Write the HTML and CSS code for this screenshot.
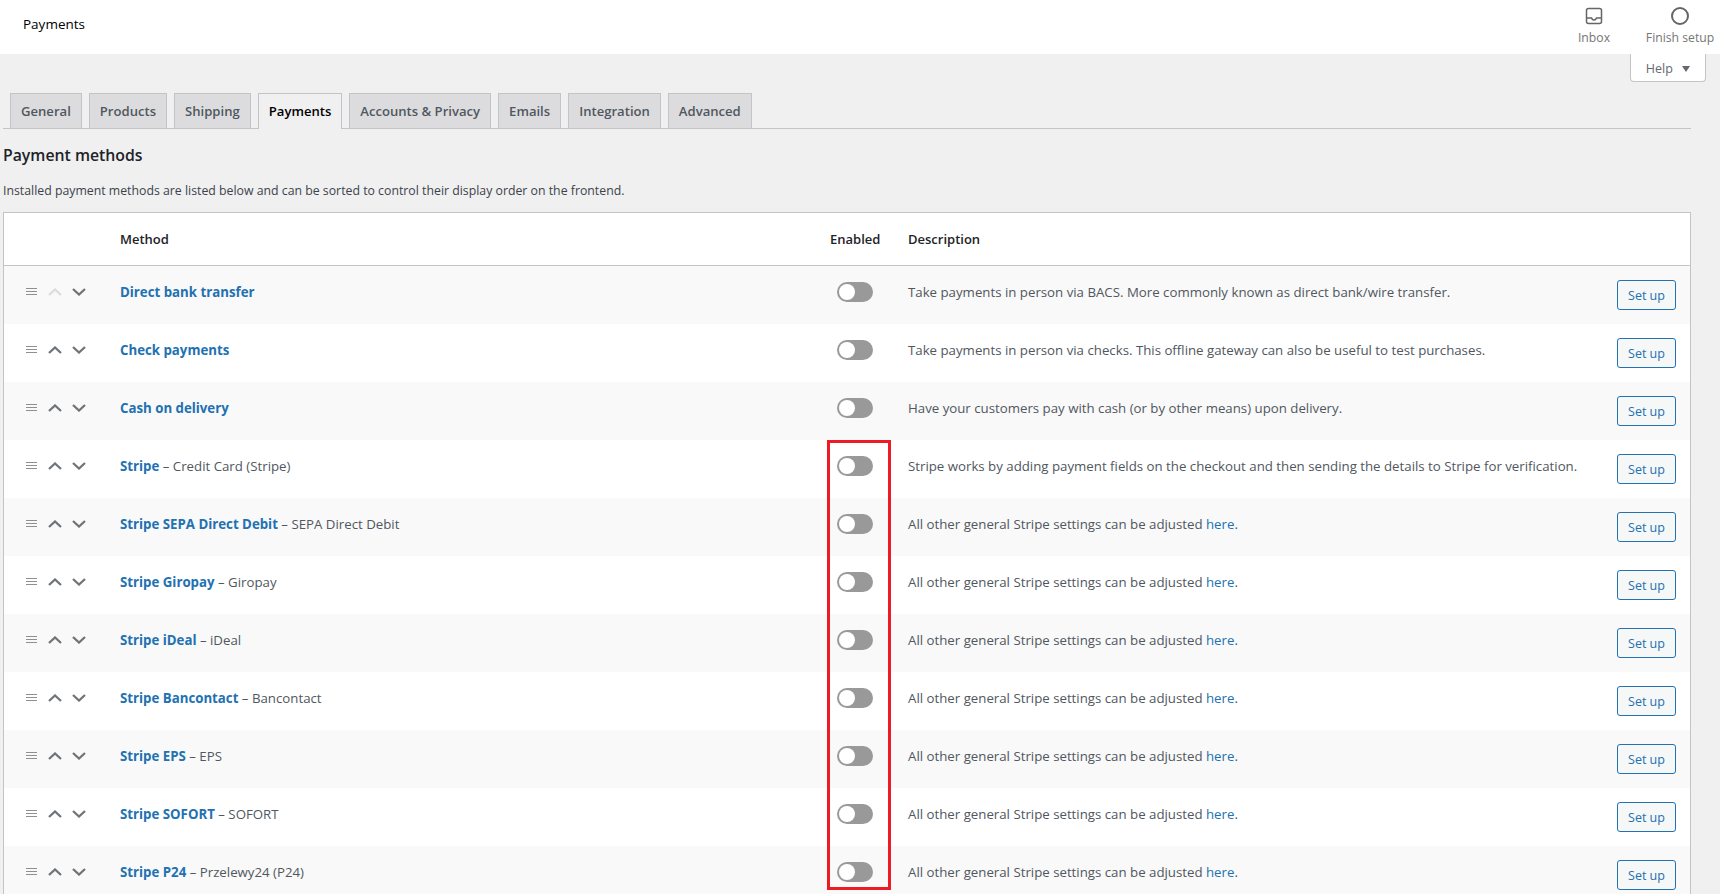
FILE: index.html
```html
<!DOCTYPE html>
<html lang="en">

<head>
    <meta charset="UTF-8">
    <meta name="viewport" content="width=device-width, initial-scale=1.0">
    <title>Payments</title>
    <link rel="stylesheet" href="styles.css">
</head>

<body>

    <svg class="defs" width="0" height="0">
        <symbol id="i-drag" viewBox="0 0 11 8"><path d="M0 .5h11M0 3.5h11M0 6.5h11" fill="none" stroke="currentColor" /></symbol>
        <symbol id="i-up" viewBox="0 0 14 8"><path d="M1 7l6-5.500L13 7" fill="none" stroke="currentColor" stroke-width="2.300" /></symbol>
        <symbol id="i-down" viewBox="0 0 14 8"><path d="M1 1l6 5.500L13 1" fill="none" stroke="currentColor" stroke-width="2.300" /></symbol>
    </svg>

    <header class="topbar">
        <div class="topbar-title">Payments</div>
        <div class="topbar-actions">
            <div class="action action-inbox">
                <svg width="18" height="18" viewBox="0 0 18 18">
                    <rect x="1.500" y="1.500" width="15" height="15" rx="2" fill="none" stroke="currentColor" stroke-width="1.500" />
                    <path d="M2 11h4.500c.5 1.500 1.300 2 2.500 2s2-.5 2.500-2H16" fill="none" stroke="currentColor" stroke-width="1.500" />
                </svg>
                <span>Inbox</span>
            </div>
            <div class="action action-setup">
                <svg width="20" height="20" viewBox="0 0 20 20">
                    <circle cx="10" cy="10" r="8" fill="none" stroke="currentColor" stroke-width="2" />
                </svg>
                <span>Finish setup</span>
            </div>
        </div>
    </header>

    <div class="help-row">
        <div class="help-tab">Help <span class="caret"></span></div>
    </div>

    <main class="content">
        <nav class="tabs">
            <a class="tab">General</a>
            <a class="tab">Products</a>
            <a class="tab">Shipping</a>
            <a class="tab active">Payments</a>
            <a class="tab">Accounts &amp; Privacy</a>
            <a class="tab">Emails</a>
            <a class="tab">Integration</a>
            <a class="tab">Advanced</a>
        </nav>

        <h2>Payment methods</h2>
        <p class="intro">Installed payment methods are listed below and can be sorted to control their display order on the frontend.</p>

        <div class="table-wrap">
            <table class="methods">
                <thead>
                    <tr>
                        <th class="col-sort"></th>
                        <th class="col-name">Method</th>
                        <th class="col-status">Enabled</th>
                        <th class="col-desc">Description</th>
                        <th class="col-action"></th>
                    </tr>
                </thead>
                <tbody>
                    <tr>
                        <td class="col-sort"><div class="sort"><svg class="drag"><use href="#i-drag" /></svg><svg class="arrow off"><use href="#i-up" /></svg><svg class="arrow"><use href="#i-down" /></svg></div></td>
                        <td class="col-name"><a>Direct bank transfer</a></td>
                        <td class="col-status"><span class="toggle"></span></td>
                        <td class="col-desc">Take payments in person via BACS. More commonly known as direct bank/wire transfer.</td>
                        <td class="col-action"><button>Set up</button></td>
                    </tr>
                    <tr>
                        <td class="col-sort"><div class="sort"><svg class="drag"><use href="#i-drag" /></svg><svg class="arrow"><use href="#i-up" /></svg><svg class="arrow"><use href="#i-down" /></svg></div></td>
                        <td class="col-name"><a>Check payments</a></td>
                        <td class="col-status"><span class="toggle"></span></td>
                        <td class="col-desc">Take payments in person via checks. This offline gateway can also be useful to test purchases.</td>
                        <td class="col-action"><button>Set up</button></td>
                    </tr>
                    <tr>
                        <td class="col-sort"><div class="sort"><svg class="drag"><use href="#i-drag" /></svg><svg class="arrow"><use href="#i-up" /></svg><svg class="arrow"><use href="#i-down" /></svg></div></td>
                        <td class="col-name"><a>Cash on delivery</a></td>
                        <td class="col-status"><span class="toggle"></span></td>
                        <td class="col-desc">Have your customers pay with cash (or by other means) upon delivery.</td>
                        <td class="col-action"><button>Set up</button></td>
                    </tr>
                    <tr>
                        <td class="col-sort"><div class="sort"><svg class="drag"><use href="#i-drag" /></svg><svg class="arrow"><use href="#i-up" /></svg><svg class="arrow"><use href="#i-down" /></svg></div></td>
                        <td class="col-name"><a>Stripe</a> – Credit Card (Stripe)</td>
                        <td class="col-status"><span class="toggle"></span></td>
                        <td class="col-desc">Stripe works by adding payment fields on the checkout and then sending the details to Stripe for verification.</td>
                        <td class="col-action"><button>Set up</button></td>
                    </tr>
                    <tr>
                        <td class="col-sort"><div class="sort"><svg class="drag"><use href="#i-drag" /></svg><svg class="arrow"><use href="#i-up" /></svg><svg class="arrow"><use href="#i-down" /></svg></div></td>
                        <td class="col-name"><a>Stripe SEPA Direct Debit</a> – SEPA Direct Debit</td>
                        <td class="col-status"><span class="toggle"></span></td>
                        <td class="col-desc">All other general Stripe settings can be adjusted <a class="plain">here</a>.</td>
                        <td class="col-action"><button>Set up</button></td>
                    </tr>
                    <tr>
                        <td class="col-sort"><div class="sort"><svg class="drag"><use href="#i-drag" /></svg><svg class="arrow"><use href="#i-up" /></svg><svg class="arrow"><use href="#i-down" /></svg></div></td>
                        <td class="col-name"><a>Stripe Giropay</a> – Giropay</td>
                        <td class="col-status"><span class="toggle"></span></td>
                        <td class="col-desc">All other general Stripe settings can be adjusted <a class="plain">here</a>.</td>
                        <td class="col-action"><button>Set up</button></td>
                    </tr>
                    <tr>
                        <td class="col-sort"><div class="sort"><svg class="drag"><use href="#i-drag" /></svg><svg class="arrow"><use href="#i-up" /></svg><svg class="arrow"><use href="#i-down" /></svg></div></td>
                        <td class="col-name"><a>Stripe iDeal</a> – iDeal</td>
                        <td class="col-status"><span class="toggle"></span></td>
                        <td class="col-desc">All other general Stripe settings can be adjusted <a class="plain">here</a>.</td>
                        <td class="col-action"><button>Set up</button></td>
                    </tr>
                    <tr>
                        <td class="col-sort"><div class="sort"><svg class="drag"><use href="#i-drag" /></svg><svg class="arrow"><use href="#i-up" /></svg><svg class="arrow"><use href="#i-down" /></svg></div></td>
                        <td class="col-name"><a>Stripe Bancontact</a> – Bancontact</td>
                        <td class="col-status"><span class="toggle"></span></td>
                        <td class="col-desc">All other general Stripe settings can be adjusted <a class="plain">here</a>.</td>
                        <td class="col-action"><button>Set up</button></td>
                    </tr>
                    <tr>
                        <td class="col-sort"><div class="sort"><svg class="drag"><use href="#i-drag" /></svg><svg class="arrow"><use href="#i-up" /></svg><svg class="arrow"><use href="#i-down" /></svg></div></td>
                        <td class="col-name"><a>Stripe EPS</a> – EPS</td>
                        <td class="col-status"><span class="toggle"></span></td>
                        <td class="col-desc">All other general Stripe settings can be adjusted <a class="plain">here</a>.</td>
                        <td class="col-action"><button>Set up</button></td>
                    </tr>
                    <tr>
                        <td class="col-sort"><div class="sort"><svg class="drag"><use href="#i-drag" /></svg><svg class="arrow"><use href="#i-up" /></svg><svg class="arrow"><use href="#i-down" /></svg></div></td>
                        <td class="col-name"><a>Stripe SOFORT</a> – SOFORT</td>
                        <td class="col-status"><span class="toggle"></span></td>
                        <td class="col-desc">All other general Stripe settings can be adjusted <a class="plain">here</a>.</td>
                        <td class="col-action"><button>Set up</button></td>
                    </tr>
                    <tr>
                        <td class="col-sort"><div class="sort"><svg class="drag"><use href="#i-drag" /></svg><svg class="arrow"><use href="#i-up" /></svg><svg class="arrow"><use href="#i-down" /></svg></div></td>
                        <td class="col-name"><a>Stripe P24</a> – Przelewy24 (P24)</td>
                        <td class="col-status"><span class="toggle"></span></td>
                        <td class="col-desc">All other general Stripe settings can be adjusted <a class="plain">here</a>.</td>
                        <td class="col-action"><button>Set up</button></td>
                    </tr>
                </tbody>
            </table>
            <!-- red annotation drawn over the table -->
            <div class="callout"></div>
        </div>
    </main>

</body>

</html>
```

FILE: styles.css
```css
html,
body {
    height: 894px;
    overflow: hidden;
}

body {
    margin: 0;
    background-color: #f0f0f1;
    color: #3c434a;
    font-family: "Open Sans", Arial, sans-serif;
    font-size: 13.25px;
    line-height: 18px;
}

.defs {
    position: absolute;
}

/* top bar */
.topbar {
    height: 54px;
    background: #fff;
    display: flex;
    justify-content: space-between;
}

.topbar-title {
    padding: 15px 0 0 23px;
    color: #000;
    font-size: 13.5px;
}

.topbar-actions {
    display: flex;
    color: #757575;
    font-size: 12.2px;
}

.action {
    display: flex;
    flex-direction: column;
    align-items: center;
    padding-top: 7px;
    white-space: nowrap;
}

.action svg {
    flex-shrink: 0;
    color: #666;
}

.action span {
    line-height: 16px;
    margin-top: 5px;
}

.action-inbox {
    width: 60px;
    margin-right: 22px;
}

.action-setup {
    width: 68px;
    margin-right: 6px;
    padding-top: 6px;
}

.action-setup span {
    margin-top: 4px;
}

/* help tab */
.help-row {
    display: flex;
    justify-content: flex-end;
    padding-right: 14px;
    height: 28px;
}

.help-tab {
    width: 74px;
    height: 27px;
    background: #fff;
    border: 1px solid #c3c4c7;
    border-top: 0;
    border-radius: 0 0 4px 4px;
    color: #646970;
    font-size: 12.5px;
    line-height: 29px;
    text-align: center;
}

.caret {
    display: inline-block;
    margin-left: 6px;
    vertical-align: 1px;
    border-top: 6px solid #646970;
    border-left: 4px solid transparent;
    border-right: 4px solid transparent;
}

/* tabs */
.content {
    padding: 0 29px 0 3px;
}

.tabs {
    display: flex;
    gap: 7px;
    margin-top: 11px;
    height: 35px;
    padding-left: 7px;
    border-bottom: 1px solid #c3c4c7;
}

.tab {
    height: 34px;
    padding: 0 10px;
    background: #dcdcde;
    border: 1px solid #c3c4c7;
    border-bottom: 0;
    color: #50575e;
    font-size: 13.1px;
    font-weight: 600;
    line-height: 34px;
}

.tab.active {
    height: 35px;
    background: #f0f0f1;
    color: #000;
}

h2 {
    margin: 14px 0 0;
    color: #1d2327;
    font-size: 15.8px;
    font-weight: 600;
    line-height: 24px;
}

.intro {
    margin: 15px 0 12px;
    font-size: 12.3px;
}

/* table */
.table-wrap {
    position: relative;
}

.methods {
    width: 100%;
    table-layout: fixed;
    border-collapse: separate;
    border-spacing: 0;
    background: #fff;
    border: 1px solid #c3c4c7;
}

.methods th {
    height: 52px;
    padding: 0;
    border-bottom: 1px solid #c3c4c7;
    color: #1d2327;
    font-size: 13px;
    font-weight: 600;
    text-align: left;
}

.methods td {
    height: 58px;
    padding: 16px 0 0;
    box-sizing: border-box;
    vertical-align: top;
    color: #50575e;
}

.methods td.col-name,
.methods td.col-desc {
    padding-top: 17px;
}

.methods tbody tr:nth-child(odd) td {
    background: #f9f9f9;
}

.col-sort {
    width: 116px;
}

.col-name {
    width: 710px;
}

.col-status {
    width: 78px;
}

.methods td.col-status {
    padding-left: 7px;
}

.col-action {
    width: 73px;
}

.col-name a {
    color: #2271b1;
    font-weight: 700;
}

a.plain {
    color: #2271b1;
}

.sort {
    display: flex;
    align-items: center;
    height: 14px;
    padding-left: 22px;
    margin-top: 3px;
}

.drag {
    width: 11px;
    height: 8px;
    color: #8c8f94;
    margin-right: 11px;
}

.arrow {
    width: 14px;
    height: 8px;
    margin-right: 10px;
    color: #6f7479;
}

.arrow.off {
    color: #dcdcde;
}

.toggle {
    display: block;
    position: relative;
    width: 36px;
    height: 20px;
    border-radius: 10px;
    background: #999;
}

.toggle::after {
    content: "";
    position: absolute;
    left: 2px;
    top: 2px;
    width: 16px;
    height: 16px;
    border-radius: 50%;
    background: #fff;
}

button {
    display: block;
    box-sizing: border-box;
    width: 59px;
    height: 30px;
    margin-top: -2px;
    padding: 0;
    background: #f6f7f7;
    border: 1px solid #2271b1;
    border-radius: 3px;
    color: #2271b1;
    font-family: inherit;
    font-size: 12.5px;
}

.callout {
    position: absolute;
    left: 824px;
    top: 228px;
    width: 58px;
    height: 444px;
    border: 3px solid #ed1c24;
}
```
